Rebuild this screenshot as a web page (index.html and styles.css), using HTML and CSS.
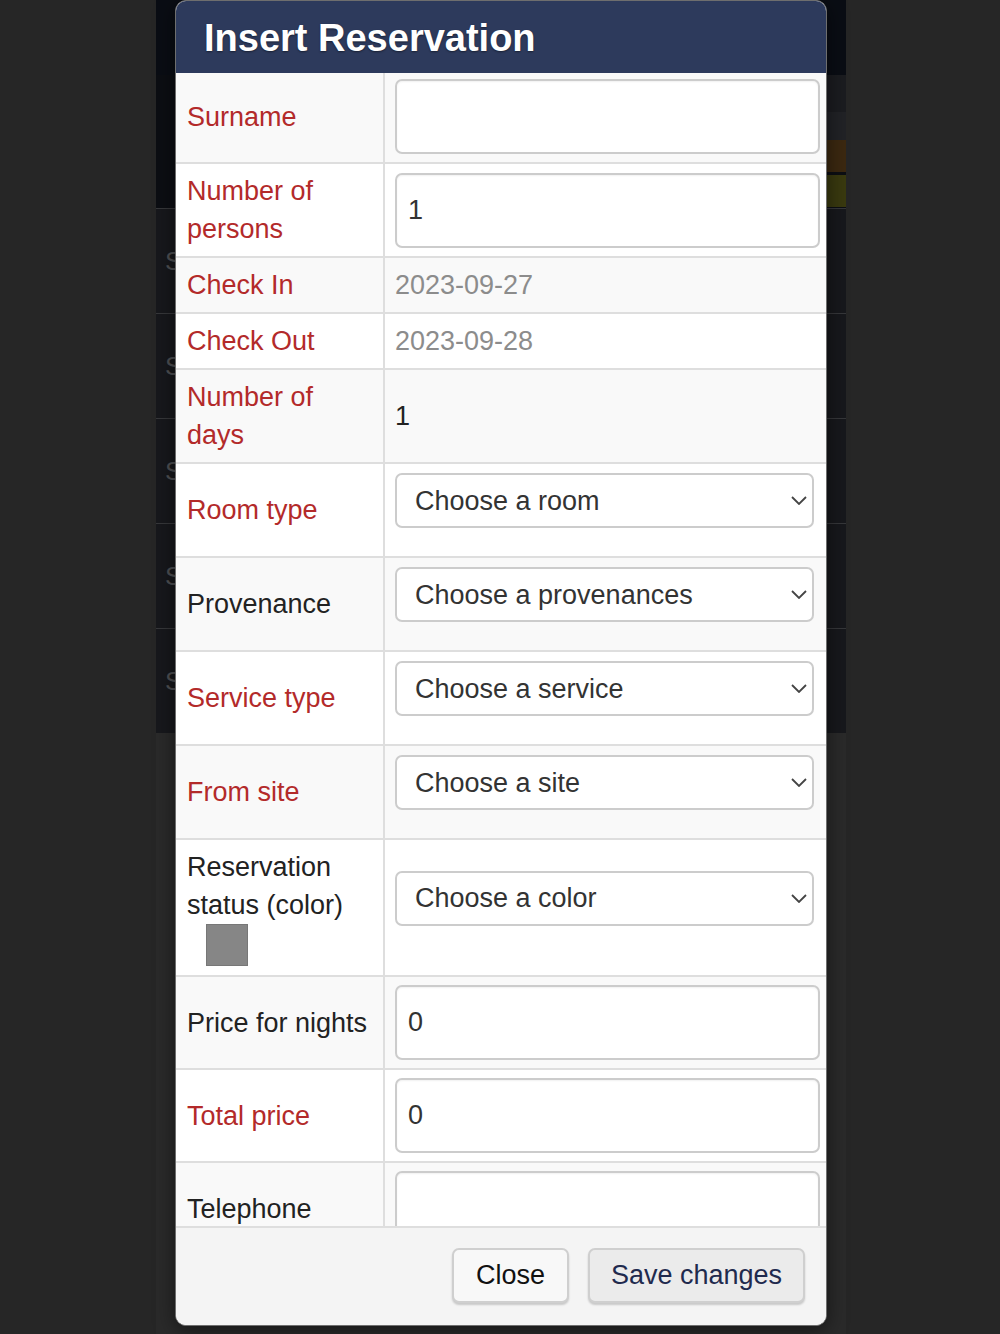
FILE: index.html
```html
<!DOCTYPE html>
<html lang="en">
<head>
    <meta charset="UTF-8">
    <meta name="viewport" content="width=device-width, initial-scale=1.0">
    <title>Insert Reservation</title>
    <link rel="stylesheet" href="styles.css">
</head>
<body>
    <!-- page behind the modal -->
    <div class="page">
        <div class="page-top">
            <div class="top-bar"></div>
            <div class="sub-bar"></div>
            <div class="strip"></div>
            <div class="color-row orange"></div>
            <div class="color-row olive"></div>
        </div>
        <div class="page-row"><span>S</span></div>
        <div class="page-row"><span>S</span></div>
        <div class="page-row"><span>S</span></div>
        <div class="page-row"><span>S</span></div>
        <div class="page-row"><span>S</span></div>
        <div class="page-rest"></div>
    </div>

    <div class="modal">
        <div class="modal-header">
            <h1>Insert Reservation</h1>
        </div>
        <div class="modal-body">
            <table class="form-table">
                <colgroup>
                    <col class="col-label">
                    <col>
                </colgroup>
                <tr class="first">
                    <td class="label required">Surname</td>
                    <td class="value"><input type="text" class="form-input" value=""></td>
                </tr>
                <tr>
                    <td class="label required">Number of persons</td>
                    <td class="value"><input type="text" class="form-input" value="1"></td>
                </tr>
                <tr>
                    <td class="label required">Check In</td>
                    <td class="value muted">2023-09-27</td>
                </tr>
                <tr>
                    <td class="label required">Check Out</td>
                    <td class="value muted">2023-09-28</td>
                </tr>
                <tr>
                    <td class="label required">Number of days</td>
                    <td class="value">1</td>
                </tr>
                <tr>
                    <td class="label required">Room type</td>
                    <td class="value">
                        <div class="select-wrap">
                            <select class="form-select"><option>Choose a room</option></select>
                            <svg class="chevron" width="16" height="9" viewBox="0 0 16 9"><path d="M1 1 L8 8 L15 1" fill="none" stroke="#444" stroke-width="1.8"/></svg>
                        </div>
                    </td>
                </tr>
                <tr>
                    <td class="label">Provenance</td>
                    <td class="value">
                        <div class="select-wrap">
                            <select class="form-select"><option>Choose a provenances</option></select>
                            <svg class="chevron" width="16" height="9" viewBox="0 0 16 9"><path d="M1 1 L8 8 L15 1" fill="none" stroke="#444" stroke-width="1.8"/></svg>
                        </div>
                    </td>
                </tr>
                <tr>
                    <td class="label required">Service type</td>
                    <td class="value">
                        <div class="select-wrap">
                            <select class="form-select"><option>Choose a service</option></select>
                            <svg class="chevron" width="16" height="9" viewBox="0 0 16 9"><path d="M1 1 L8 8 L15 1" fill="none" stroke="#444" stroke-width="1.8"/></svg>
                        </div>
                    </td>
                </tr>
                <tr>
                    <td class="label required">From site</td>
                    <td class="value">
                        <div class="select-wrap">
                            <select class="form-select"><option>Choose a site</option></select>
                            <svg class="chevron" width="16" height="9" viewBox="0 0 16 9"><path d="M1 1 L8 8 L15 1" fill="none" stroke="#444" stroke-width="1.8"/></svg>
                        </div>
                    </td>
                </tr>
                <tr>
                    <td class="label">Reservation status (color)<span class="swatch"></span></td>
                    <td class="value">
                        <div class="select-wrap">
                            <select class="form-select"><option>Choose a color</option></select>
                            <svg class="chevron" width="16" height="9" viewBox="0 0 16 9"><path d="M1 1 L8 8 L15 1" fill="none" stroke="#444" stroke-width="1.8"/></svg>
                        </div>
                    </td>
                </tr>
                <tr>
                    <td class="label">Price for nights</td>
                    <td class="value"><input type="text" class="form-input" value="0"></td>
                </tr>
                <tr>
                    <td class="label required">Total price</td>
                    <td class="value"><input type="text" class="form-input" value="0"></td>
                </tr>
                <tr>
                    <td class="label">Telephone</td>
                    <td class="value"><input type="text" class="form-input" value=""></td>
                </tr>
            </table>
        </div>
        <div class="modal-footer">
            <button class="btn btn-close">Close</button>
            <button class="btn btn-save">Save changes</button>
        </div>
    </div>
</body>
</html>
```

FILE: styles.css
```css
* {
    margin: 0;
    padding: 0;
    box-sizing: border-box;
}

body {
    background-color: #262626;
    font-family: 'Liberation Sans', Arial, sans-serif;
    width: 1000px;
    height: 1334px;
    overflow: hidden;
    position: relative;
}

/* page behind the modal */
.page {
    margin-left: 156px;
    width: 690px;
    height: 1334px;
    display: flex;
    flex-direction: column;
    background: #141519;
}

.page-top {
    height: 208px;
    background: #0c0e13;
    display: flex;
    flex-direction: column;
    align-items: flex-end;
}

.top-bar {
    height: 75px;
    width: 100%;
    background: #0a0d14;
}

.sub-bar {
    height: 37px;
    width: 300px;
    background: #1b1c20;
}

.strip {
    height: 28px;
    width: 300px;
    background: #212226;
}

.color-row {
    height: 32px;
    width: 300px;
}

.color-row.orange {
    background: #3b2810;
    margin-bottom: 3px;
}

.color-row.olive {
    background: #39390f;
}

.page-row {
    height: 105px;
    border-top: 1px solid #36373a;
    background: #17181c;
    display: flex;
    align-items: center;
    padding-left: 9px;
    color: #4e4f52;
    font-size: 26px;
}

.page-rest {
    flex: 1;
    background: #2a2a2a;
}

/* modal */
.modal {
    position: absolute;
    left: 175px;
    top: 0;
    width: 652px;
    height: 1326px;
    background: #fff;
    border: 1px solid #6e6e6e;
    border-radius: 11px;
    overflow: hidden;
    display: flex;
    flex-direction: column;
    box-shadow: 0 4px 20px rgba(0, 0, 0, 0.5);
}

.modal-header {
    height: 72px;
    background: #2d3a5c;
    display: flex;
    align-items: center;
    padding-left: 28px;
    padding-top: 2px;
}

.modal-header h1 {
    color: #fff;
    font-size: 38px;
    font-weight: bold;
    text-shadow: 0 1px 2px rgba(0, 0, 0, 0.45);
}

.modal-body {
    height: 1153px;
    overflow: hidden;
}

.form-table {
    width: 100%;
    border-collapse: separate;
    border-spacing: 0;
    table-layout: fixed;
    font-size: 27px;
    line-height: 38px;
}

.col-label {
    width: 209px;
}

.form-table tr:nth-child(odd) td {
    background: #f9f9f9;
}

.form-table td {
    padding: 8px 6px 8px 10px;
    border-bottom: 2px solid #dedede;
    vertical-align: middle;
    color: #222;
}

.form-table tr.first td {
    padding-top: 6px;
}

.form-table td.label {
    padding-left: 11px;
    padding-right: 13px;
    border-right: 2px solid #dedede;
}

.form-table td.required {
    color: #b32a2a;
}

.form-table td.muted {
    color: #8c8c8c;
}

.swatch {
    display: block;
    width: 42px;
    height: 42px;
    margin-left: 19px;
    margin-bottom: 1px;
    background: #868686;
    border: 1px solid #777;
}

.form-input {
    display: block;
    width: 425px;
    height: 75px;
    border: 2px solid #cccccc;
    border-radius: 7px;
    padding: 0 11px;
    font-family: 'Liberation Sans', Arial, sans-serif;
    font-size: 27px;
    color: #333;
    background: #fff;
    box-shadow: inset 0 1px 2px rgba(0, 0, 0, 0.06);
    outline: none;
}

.select-wrap {
    position: relative;
    width: 419px;
    margin-top: 1px;
    margin-bottom: 20px;
}

.form-select {
    display: block;
    width: 419px;
    height: 55px;
    border: 2px solid #cccccc;
    border-radius: 7px;
    padding: 0 40px 0 18px;
    font-family: 'Liberation Sans', Arial, sans-serif;
    font-size: 27px;
    color: #333;
    background: #fff;
    appearance: none;
    -webkit-appearance: none;
    outline: none;
}

.chevron {
    position: absolute;
    right: 7px;
    top: 23px;
    pointer-events: none;
}

.modal-footer {
    flex: 1;
    background: #f4f4f4;
    border-top: 2px solid #dedede;
    display: flex;
    justify-content: flex-end;
    align-items: flex-start;
    gap: 19px;
    padding: 20px 21px 0 0;
}

.btn {
    height: 55px;
    border: 2px solid #cfcfcf;
    border-radius: 7px;
    font-family: 'Liberation Sans', Arial, sans-serif;
    font-size: 27px;
    box-shadow: 0 2px 2px rgba(0, 0, 0, 0.18);
    cursor: pointer;
}

.btn-close {
    width: 117px;
    background: #f8f8f8;
    color: #111;
}

.btn-save {
    width: 217px;
    background: #ebebeb;
    color: #1f2a4e;
}
```
